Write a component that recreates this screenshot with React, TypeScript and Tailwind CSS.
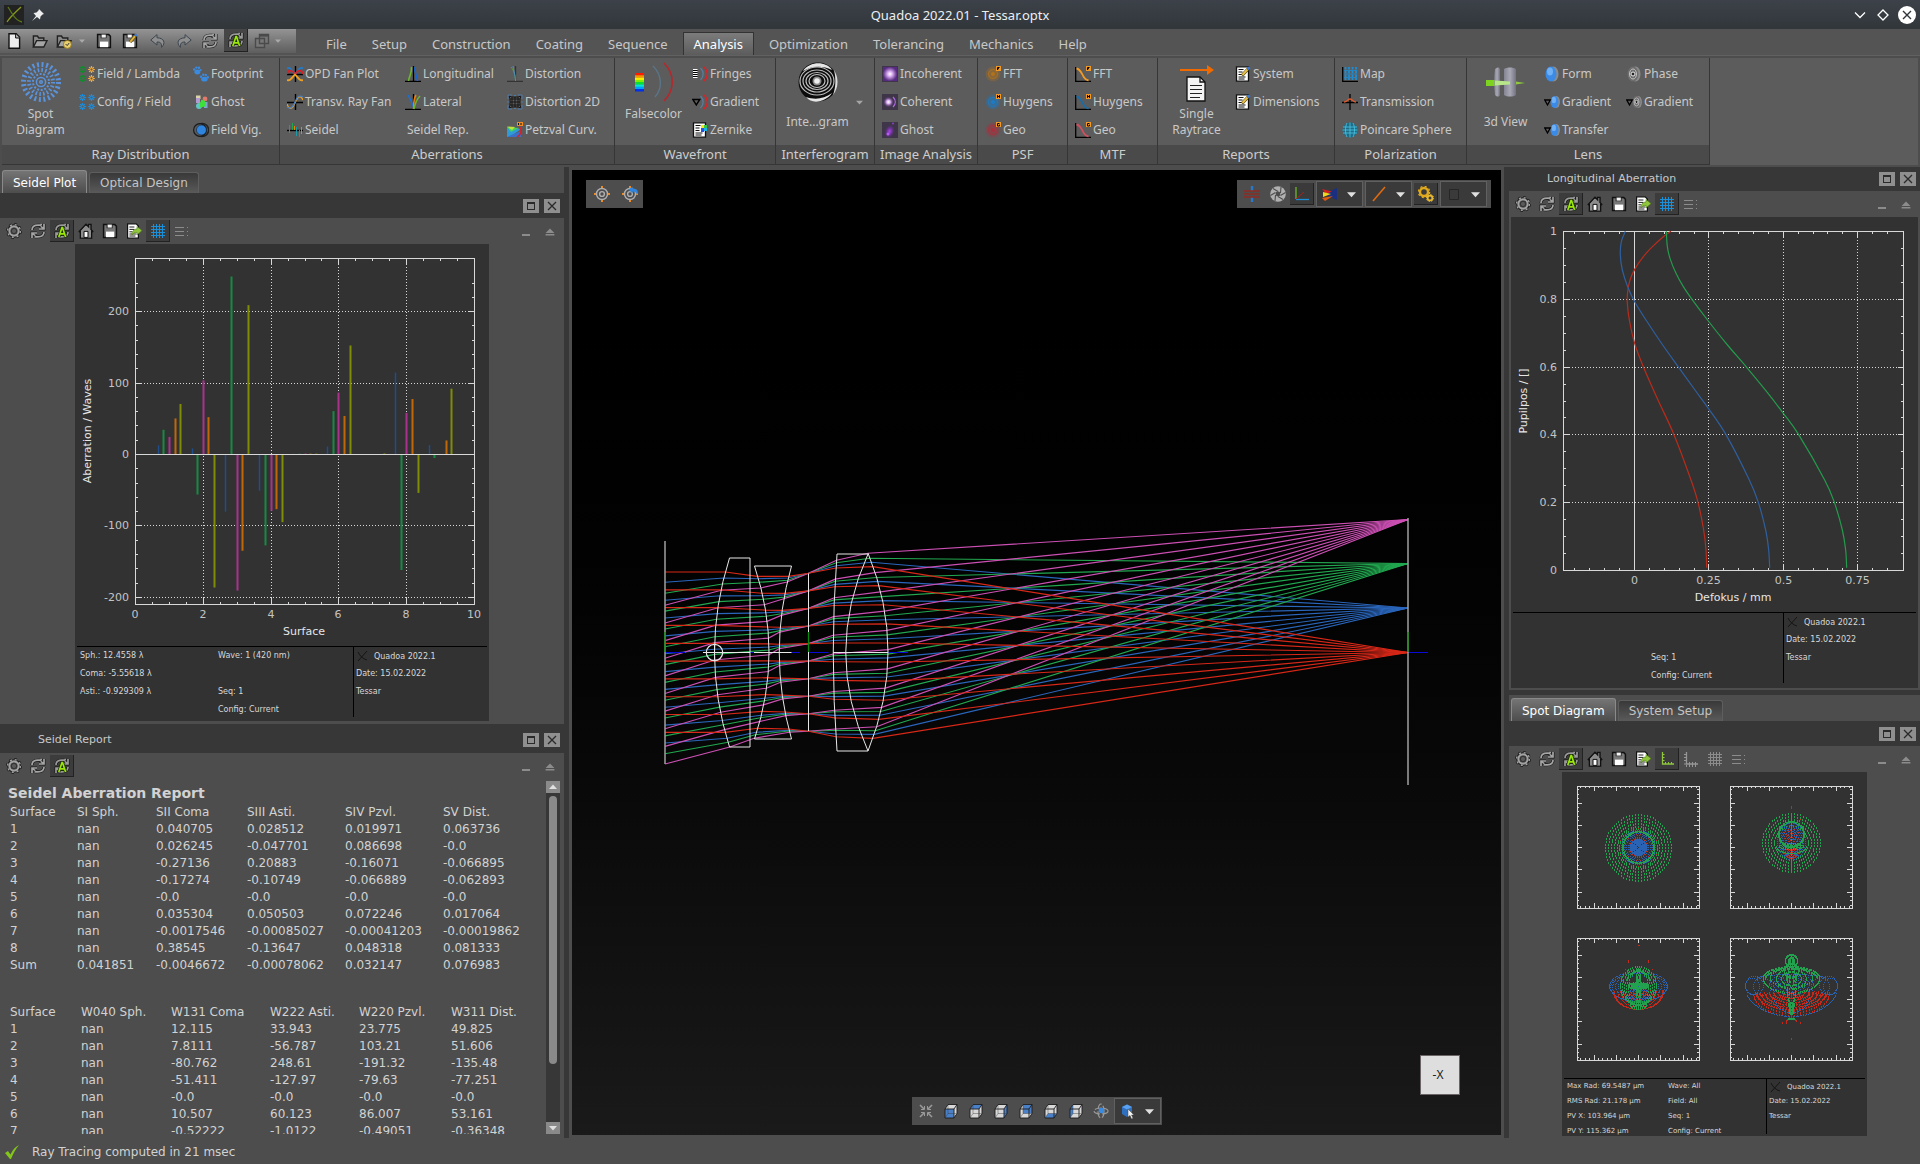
import type { ReactNode } from 'react'

/* ---------- icons ---------- */

const Svg = ({ size = 16, box = 16, children }: { size?: number; box?: number; children: ReactNode }) => (
  <svg width={size} height={size} viewBox={`0 0 ${box} ${box}`} fill="none" className="shrink-0" aria-hidden="true">
    {children}
  </svg>
)

const Gear = () => (
  <Svg>
    <circle cx="8" cy="8" r="6.6" stroke="#1c1c1c" strokeWidth="2.6" strokeDasharray="2.6 2.6" />
    <circle cx="8" cy="8" r="5" stroke="#1c1c1c" strokeWidth="3.6" />
    <circle cx="8" cy="8" r="6.4" stroke="#a2a2a2" strokeWidth="1.4" strokeDasharray="2 3.03" />
    <circle cx="8" cy="8" r="4.6" stroke="#a2a2a2" strokeWidth="2.2" />
    <circle cx="8" cy="8" r="2.6" fill="#5a5a5a" stroke="#2a2a2a" strokeWidth=".8" />
  </Svg>
)

const refreshPath = 'M2 7C2 3.6 5 2.2 8 2.2h3.4M11.2 2.2V.8M14 1v5h-5M14 5.6 10.6 3.4M14 9c0 3.4-3 4.8-6 4.8H4.6M2 15v-5h5M2 10.4l3.4 2.2'
const Refresh = () => (
  <Svg>
    <path d={refreshPath} stroke="#1a1a1a" strokeWidth="3" />
    <path d={refreshPath} stroke="#a5a5a5" strokeWidth="1.7" />
  </Svg>
)

const AutoRefresh = () => (
  <Svg>
    <path d={refreshPath} stroke="#151515" strokeWidth="3" />
    <path d={refreshPath} stroke="#9a9a9a" strokeWidth="1.7" />
    <path d="M4.8 14 8 4.6h.5L11.6 14M6 10.8h4.6" stroke="#1b2b00" strokeWidth="3" />
    <path d="M4.8 14 8 4.6h.5L11.6 14M6 10.8h4.6" stroke="#9be80c" strokeWidth="1.7" />
  </Svg>
)

const Home = () => (
  <Svg>
    <path d="M.8 9 8 1.2l2.6 2.6V1.4h2.4v5l2.2 2.6M2.4 8v7h11.2V8" stroke="#111" strokeWidth="1.4" fill="#858585" />
    <path d="M8 2.6 13 8v6.4H3V8Z" fill="#8c8c8c" />
    <path d="M6 8.4h4v6H6z" fill="#fff" stroke="#111" strokeWidth="1" />
  </Svg>
)

const Save = ({ pen = false }: { pen?: boolean }) => (
  <Svg>
    <path d="M1.6 1.6h11.2l1.6 1.6v11.2H1.6Z" fill="#777" stroke="#111" strokeWidth="1.5" />
    <path d="M4.6 1.2h6v4h-6z" fill="#222" />
    <path d="M7.6 1.6h2.2v3H5.6v-3z" fill="#f5f5f5" />
    <path d="M4 8.6h8.2v5.6H4z" fill="#fff" />
    {pen && (
      <>
        <path d="M8 9 14 2" stroke="#5a4a10" strokeWidth="3.4" />
        <path d="M8.2 8.8 13 3.2" stroke="#e0b23a" strokeWidth="2" />
        <path d="m13 3.2 1.6-1.8" stroke="#3d7bd8" strokeWidth="2.6" />
      </>
    )}
  </Svg>
)

const Export = () => (
  <Svg>
    <path d="M1.6.8h8.6l2.2 2.2v12.2H1.6Z" fill="#fff" stroke="#111" strokeWidth="1.2" />
    <path d="M3.4 4h5M3.4 6.4h5M3.4 8.8h3M3.4 11h7M3.4 13h6" stroke="#222" />
    <path d="M6 12c0-4 2-6 5-6V3.4L16 7.6 11 12V9.4c-2.4 0-4 .8-5 2.6Z" fill="#8fc63d" stroke="#4f7a14" strokeWidth=".6" />
  </Svg>
)

const Grid = ({ color = '#1b8fd8' }: { color?: string }) => (
  <Svg>
    <path d="M3.5 1v14M6.5 1v14M9.5 1v14M12.5 1v14M1 3.5h14M1 6.5h14M1 9.5h14M1 12.5h14" stroke={color} />
  </Svg>
)

const List = () => (
  <Svg>
    <path d="M1 4.5h9M1 8.5h9M1 12.5h9M13 4.5h1M13 8.5h1M13 12.5h1" stroke="#8c8c8c" />
  </Svg>
)

const Axis = ({ gray = false }: { gray?: boolean }) => (
  <Svg>
    <path d="M3.5 1v12H15" stroke={gray ? '#969696' : '#8fc63d'} strokeWidth="1.3" />
    <path
      d={gray ? 'M1 3.5h2M1 6.5h2M1 9.5h2M1 13h2M3.5 16v-2M6.5 11v5M9.5 11v5M12.5 11v5' : 'M3.5 3.5h2M3.5 6.5h2M3.5 9.5h2M6.5 11v2M9.5 11v2M12.5 11v2'}
      stroke={gray ? '#969696' : '#8fc63d'}
    />
  </Svg>
)

const Minimize = () => (
  <Svg>
    <path d="M4 11h8v2H4z" fill="#8c8c8c" />
  </Svg>
)

const Eject = () => (
  <Svg>
    <path d="M8 5.4 12.4 10H3.6ZM3.6 11h8.8v1.4H3.6z" fill="#8c8c8c" />
  </Svg>
)

const Arrow = ({ color = '#8c8c8c', size = 8 }: { color?: string; size?: number }) => (
  <Svg size={size} box={8}>
    <path d="M0 2h8L4 6.4Z" fill={color} />
  </Svg>
)

const Folder = ({ clock = false }: { clock?: boolean }) => (
  <Svg>
    <path d="M1.4 14V3h4l1.4 2h5v3" fill="#8a8a8a" stroke="#222" strokeWidth="1.4" />
    <path d="M1.4 14 4.6 7.6H15L11.8 14Z" fill="#a5a5a5" stroke="#222" strokeWidth="1.4" />
    {clock && (
      <>
        <circle cx="11.4" cy="11.4" r="4" fill="#e9cf74" stroke="#8a6d14" strokeWidth=".8" />
        <path d="m9.6 11 1.6 1.6 2-2.6" stroke="#333" />
      </>
    )}
  </Svg>
)

const NewFile = () => (
  <Svg>
    <path d="M3 .8h7.2l3.4 3.4v11H3Z" fill="#eee" stroke="#111" strokeWidth="1.4" />
    <path d="M9.6 1v4h4" fill="#bbb" stroke="#111" />
  </Svg>
)

const Undo = ({ flip = false }: { flip?: boolean }) => (
  <Svg>
    <path
      transform={flip ? 'matrix(-1 0 0 1 16 0)' : undefined}
      d="M7 1.6.8 7 7 12V9c3.4-.2 5 1.4 4.6 5.4C15.8 10 14.4 5 7 4.8Z"
      fill="#8e8e8e"
      stroke="#3c4650"
    />
  </Svg>
)

const Windows = () => (
  <Svg>
    <path d="M5.5 1.5h9v9h-9zM1.5 5.5h9v9h-9z" fill="#777" stroke="#4a4a4a" strokeWidth="1.4" />
    <path d="M5 2.6h10" stroke="#4a4a4a" strokeWidth="2" />
  </Svg>
)

const star = (x: number, y: number) =>
  [0, 45, 90, 135, 180, 225, 270, 315]
    .map((a) => {
      const c = Math.cos((a * Math.PI) / 180)
      const s = Math.sin((a * Math.PI) / 180)
      return `M${x + c} ${y + s}L${x + c * 3.4} ${y + s * 3.4}`
    })
    .join('')
const Stars = ({ a, b }: { a: string; b: string }) => (
  <Svg>
    <path d={star(3.5, 3.5) + star(3.5, 12.5)} stroke={a} strokeWidth="1.2" />
    <path d={star(12.5, 3.5) + star(12.5, 12.5)} stroke={b} strokeWidth="1.2" />
  </Svg>
)

const Footprint = () => (
  <Svg>
    <g fill="#3a8ae0">
      <ellipse cx="4.4" cy="6" rx="3" ry="2.4" />
      <circle cx="1.2" cy="3.4" r="1.2" />
      <circle cx="3.4" cy="1.6" r="1.2" />
      <circle cx="6" cy="1.8" r="1.2" />
      <circle cx="7.6" cy="4" r="1.1" />
      <ellipse cx="11.4" cy="13.2" rx="3.2" ry="2.4" />
      <circle cx="8" cy="10.8" r="1.2" />
      <circle cx="10.2" cy="8.8" r="1.2" />
      <circle cx="12.8" cy="9" r="1.2" />
      <circle cx="14.8" cy="11.2" r="1.2" />
    </g>
  </Svg>
)

const GhostColor = () => (
  <Svg>
    <rect x="3" y="1.5" width="4.5" height="3.5" fill="#dcd3a8" />
    <rect x="3" y="4" width="4" height="5" fill="#b39ad0" />
    <circle cx="12" cy="5" r="2.4" fill="#e27a6c" />
    <circle cx="6" cy="12" r="3" fill="#62c6c4" />
    <rect x="11" y="8" width="3.5" height="6" fill="#7fa4cf" />
    <path d="M8.5 5.5 12 7v5.5l-5 1V9Z" fill="#3de03a" />
  </Svg>
)

const FieldVig = () => (
  <Svg>
    <circle cx="9" cy="8" r="6.6" stroke="#222" strokeWidth="1.4" />
    <circle cx="7" cy="8" r="6.4" fill="#5c5c5c" stroke="#1a1a1a" strokeWidth="1.2" />
    <circle cx="8.4" cy="8" r="5" fill="#2f84dd" stroke="#10243a" strokeWidth=".6" />
  </Svg>
)

const OpdFan = () => (
  <Svg>
    <path d="M0 8.5h16M8.5 0v16" stroke="#000" strokeWidth="1.4" />
    <path d="M0 2.5c3-2 4 1 8 6 4-5 5-8 8-6" stroke="#1d7ed0" strokeWidth="1.8" />
    <path d="M0 8c2-6 6-3 8 .5C10 5 14 2 16 8" stroke="#d2232a" strokeWidth="1.8" />
    <path d="M0 14c3 1 4-1 8-5.5 4 4.5 5 6.5 8 5.5" stroke="#f0a020" strokeWidth="1.8" />
  </Svg>
)

const RayFan = () => (
  <Svg>
    <path d="M0 8.5h16M8.5 0v16" stroke="#000" strokeWidth="1.4" />
    <path d="M0 10c2 6 5 6 8-1s6-8 8-3" stroke="#f0a020" strokeWidth="1.3" />
    <path d="M0 13c3 2 6 1 8-5s5-7 8-5" stroke="#4a7fc0" strokeWidth="1.3" />
  </Svg>
)

const SeidelIcon = () => (
  <Svg>
    <path d="M0 8.5h16" stroke="#000" strokeWidth="1.4" />
    <path d="M2.5 3v8M9.5 5v9" stroke="#1a9aa8" />
    <path d="M5.5 1v7M12.5 8v7" stroke="#1fa650" />
    <path d="M7.5 4v4M14.5 5v7" stroke="#f07f09" />
  </Svg>
)

const Longi = () => (
  <Svg>
    <path d="M0 15.5h16M8.5 0v15" stroke="#000" strokeWidth="1.3" />
    <path d="M3.5 15C4 10 7 8 6.5 1" stroke="#6db52c" strokeWidth="1.6" />
    <path d="M10 1c-1 6 2 8 2.5 14" stroke="#1565d8" strokeWidth="1.6" />
  </Svg>
)

const Lateral = () => (
  <Svg>
    <path d="M0 15.5h16M8.5 0v15" stroke="#000" strokeWidth="1.3" />
    <path d="M3 1c2 4 5 8 5.5 14" stroke="#1c6fd6" strokeWidth="1.5" />
    <path d="M11 1C8 6 9 10 8.5 15" stroke="#f07f09" strokeWidth="1.5" />
    <path d="M15 2c-3 3-5 8-6 13" stroke="#6db52c" strokeWidth="1.5" />
  </Svg>
)

const Distortion = () => (
  <Svg>
    <path d="M0 15.5h16M8.5 0v15" stroke="#333" strokeWidth="1.3" />
    <path d="M4 1c3 4 4 7 4.5 14" stroke="#5c9c3a" />
    <path d="M6 0c1 6 2 8 2.5 15" stroke="#4a90c8" />
  </Svg>
)

const Distortion2D = () => (
  <Svg>
    <path
      d="M2 2c3 1.500 9 1.500 12 0M3 5h10M3 8h10M3 11h10M2 14c3-1.500 9-1.500 12 0M2 2c1.500 3 1.500 9 0 12M5 3v10M8 3v10M11 3v10M14 2c-1.500 3-1.500 9 0 12"
      stroke="#161616"
    />
    <path d="M1 5V1h4M7 1.5h2M11 1h4v4M15 7v2M15 11v4h-4M9 14.5H7M5 15H1v-4M1 9V7" stroke="#4a7aaa" />
  </Svg>
)

const Petzval = () => (
  <Svg>
    <path d="M0 5 14 7 3 15H0Z" fill="#2e9ad8" />
    <path d="M0 5 12 6 4 10Z" fill="#45d35f" />
    <path d="M0 4.5 8 5 5 8Z" fill="#c5e23a" />
    <path d="M0 15 14 9v6Z" fill="#3b6fc8" />
    <path d="M13 5c2 4 1 8-3 10" stroke="#d2232a" strokeWidth="1.5" />
    <path d="M10 0h6v4h-6z" fill="#f08a24" />
    <path d="M11.5 1v2M14 1v2" stroke="#111" />
  </Svg>
)

const arcs = (
  <>
    <path d="M8.500 2c3.500 3.500 3.500 8.500 0 12" stroke="#5a7d9c" strokeWidth="1.3" />
    <path d="M12 1c4.500 4 4.500 10 0 14" stroke="#d8232a" strokeWidth="1.5" />
  </>
)

const Fringes = () => (
  <Svg>
    <path d="M1 3.5h4.500M1 5.500h4.500M1 7.500h4.500M1 9.500h4.500M1 11.500h4.500" stroke="#fff" />
    <path d="M1 4.500h4.500M1 6.500h4.500M1 8.500h4.500M1 10.500h4.500" stroke="#000" />
    {arcs}
  </Svg>
)

const Gradient = () => (
  <Svg>
    <path d="M.8 5.500h7L4.300 11Z" stroke="#000" strokeWidth="1.4" />
    {arcs}
  </Svg>
)

const Report = ({ tint }: { tint: 'rainbow' | 'pen' }) => (
  <Svg>
    <path d="M1.500.8h12v14.400h-12z" fill="#fff" stroke="#111" strokeWidth="1.3" />
    <path d="M3.500 3.500h5M3.500 6h4M3.500 8.500h4M3.500 11h7M3.500 13h6" stroke="#111" />
    {tint === 'rainbow' ? (
      <>
        <path d="M9 3h3v3H9z" fill="#f6e71c" />
        <path d="M12 3h3v3h-3z" fill="#37c24a" />
        <path d="M9 6h3v4H9z" fill="#2b50e0" />
        <path d="M12 6h3v3h-3z" fill="#18b5e8" />
      </>
    ) : (
      <>
        <path d="m7 9.500 6.500-7" stroke="#4d4010" strokeWidth="3.2" />
        <path d="m7.400 9 5-5.500" stroke="#eac24a" strokeWidth="2" />
        <path d="m12.600 3.300 2-2" stroke="#3d7bd8" strokeWidth="2.4" />
      </>
    )}
  </Svg>
)

const Glow = ({ kind }: { kind: 'inc' | 'coh' | 'ghost' }) => (
  <Svg>
    <defs>
      <radialGradient id={`glow-${kind}`}>
        <stop offset="0" stopColor={kind === 'ghost' ? '#a347e0' : '#fff'} />
        <stop offset=".35" stopColor={kind === 'ghost' ? '#8038b0' : '#dcb0f2'} />
        <stop offset="1" stopColor="#5a2a86" stopOpacity={kind === 'inc' ? 0.9 : 0} />
      </radialGradient>
    </defs>
    <rect width="16" height="16" fill="#3e3548" />
    {kind === 'inc' && <rect x="1" y="1" width="14" height="14" fill="url(#glow-inc)" />}
    {kind === 'coh' && (
      <>
        <circle cx="6.5" cy="8" r="5.5" fill="url(#glow-coh)" />
        <path d="M11 3c3 3 3 7 0 10" stroke="#b06be0" strokeWidth="1.3" />
      </>
    )}
    {kind === 'ghost' && (
      <>
        <ellipse cx="7.5" cy="9.5" rx="5" ry="7" transform="rotate(20 7.5 9.5)" fill="url(#glow-ghost)" />
        <circle cx="6" cy="12" r="1.5" fill="#b95bf5" />
        <circle cx="11" cy="1.5" r="1" fill="#8a3fc0" />
      </>
    )}
  </Svg>
)

// small orange tag in the corner
const tags: Record<string, string> = {
  F: 'M12.5 4V1.5h2M12.5 2.7h1.5',
  H: 'M12.5 1v3M14.5 1v3M12.5 2.5h2',
  G: 'M14.5 1.5h-2V4h2V2.7',
}
const Tag = ({ t }: { t: string }) => (
  <>
    <path d="M11 0h5v5h-5z" fill="#f39a26" />
    <path d={tags[t]} stroke="#000" />
  </>
)

const Psf = ({ color, t }: { color: string; t: string }) => (
  <Svg>
    <circle cx="8" cy="8" r="7.5" fill={color} opacity=".3" />
    <circle cx="8" cy="8" r="5.5" fill={color} opacity=".35" />
    <circle cx="8" cy="8" r="4.5" stroke={color} opacity=".7" />
    <circle cx="8" cy="8" r="2" fill={color} />
    <Tag t={t} />
  </Svg>
)

const Mtf = ({ color, t }: { color: string; t: string }) => (
  <Svg>
    <path d="M.7 1v14.3H16" stroke="#000" strokeWidth="1.3" />
    <path d="M1.5 2.5c4 .5 5 5 7 8s2 3.5 5 4" stroke={color} strokeWidth="1.8" />
    <Tag t={t} />
  </Svg>
)

const MapIcon = () => (
  <Svg>
    <path d="M.7 1v14.3H16" stroke="#000" strokeWidth="1.3" />
    <path d="M3.5 1v13M7 1v13M10.5 1v13M14 1v13" stroke="#1b8fd8" strokeWidth="1.8" strokeDasharray="2.5 1.2" />
    <path d="M2 4.5h13M2 8h13M2 11.5h13" stroke="#1b8fd8" strokeWidth=".8" />
  </Svg>
)

const Transmission = () => (
  <Svg>
    <path d="M8 0v16M0 8.500h16" stroke="#000" strokeWidth="1.3" />
    <path d="M2 8c3 0 4-3 6-3s3 3 6 3" stroke="#e05a2a" strokeWidth="1.3" />
  </Svg>
)

const Sphere = () => (
  <Svg>
    <circle cx="8" cy="8" r="7.5" fill="#1f6c86" />
    <path d="M8 .5v15M5 1c-2 4-2 10 0 14M11 1c2 4 2 10 0 14M1 5h14M.5 8h15M1 11h14" stroke="#4cc8e8" strokeWidth=".8" />
  </Svg>
)

const LensIcon = ({ phase = false, tri = false }: { phase?: boolean; tri?: boolean }) => (
  <Svg>
    <g transform={tri ? 'translate(5.5 1.5) scale(.72 .8)' : undefined}>
      <ellipse cx="9.5" cy="8" rx="5" ry="7.5" fill="#8c8c8c" />
      <ellipse cx="7" cy="8" rx="5.5" ry="7.5" fill={phase ? '#6e6e6e' : '#3a8ae6'} />
      {phase ? (
        <>
          <ellipse cx="7" cy="8" rx="3.5" ry="5" stroke="#ccc" strokeWidth=".9" />
          <circle cx="7" cy="8" r="2" fill="#222" stroke="#eee" />
        </>
      ) : (
        <ellipse cx="6" cy="5.5" rx="3" ry="4" fill="#6fb0f5" />
      )}
    </g>
    {tri && <path d="M.8 6h5.5L3.5 11Z" stroke="#000" strokeWidth="1.3" />}
  </Svg>
)

/* large ribbon drawings */

const SpotBig = () => (
  <Svg size={40} box={40}>
    <g stroke="#5a93dc">
      <circle cx="20" cy="20" r="17.5" strokeWidth="5" strokeDasharray="2 2.582" />
      <circle cx="20" cy="20" r="12" strokeWidth="4" strokeDasharray="1.6 2.17" />
      <circle cx="20" cy="20" r="8" strokeWidth="2" strokeDasharray="2 1.6" />
      <circle cx="20" cy="20" r="4.6" strokeWidth="1.5" />
      <circle cx="20" cy="20" r="1.3" strokeWidth="1.5" />
    </g>
  </Svg>
)

const Falsecolor = () => (
  <Svg size={40} box={40}>
    {['#ff1a00', '#ff9000', '#f6f000', '#7df000', '#00e830', '#00e8d0', '#00a0ff', '#0030e8'].map((c, i) => (
      <rect key={c} x="1" y={11 + i * 2.3} width="9" height="2.4" fill={c} />
    ))}
    <path d="M19 4c9 9 10 22 2 31" stroke="#5a7488" strokeWidth="1.4" />
    <path d="M30 1c11 11 11 27 0 38" stroke="#b5282c" strokeWidth="1.6" />
  </Svg>
)

const Interfero = () => (
  <Svg size={40} box={40}>
    <circle cx="20" cy="20" r="19.5" fill="#0c0c0c" />
    <path d="M5 9C12-1 28-1 34 8 24 3 14 4 5 9ZM8 35c9 3 18 2 26-4-6 9-20 12-26 4Z" fill="#e6e6e6" />
    <path d="M36 8c5 8 5 17-1 25 3-9 3-17 1-25Z" fill="#ddd" />
    <g stroke="#bdbdbd" strokeWidth="1.2">
      <ellipse cx="19" cy="19" rx="17" ry="14" />
      <ellipse cx="19" cy="19" rx="14" ry="11" />
      <ellipse cx="19" cy="19" rx="11" ry="8.5" />
      <ellipse cx="19" cy="19" rx="8" ry="6.5" />
    </g>
    <circle cx="19" cy="19" r="4.5" fill="#888" />
    <circle cx="19" cy="19" r="2.8" fill="#eee" />
  </Svg>
)

const SingleRay = () => (
  <Svg size={40} box={40}>
    <path d="M3 8h28" stroke="#f06a00" strokeWidth="2" />
    <path d="M30 3l7 5-7 5Z" fill="#f06a00" />
    <path d="M10 15h13l5 5v19H10Z" fill="#f4f4f4" stroke="#111" strokeWidth="1.3" />
    <path d="M23 15v5h5" stroke="#111" strokeWidth="1.3" />
    <path d="M13 23.500h12M13 27.500h12M13 31.500h12M13 35.500h10" stroke="#222" strokeWidth="1.2" />
  </Svg>
)

const View3d = () => (
  <Svg size={40} box={40}>
    <defs>
      <linearGradient id="lens3d">
        <stop offset="0" stopColor="#8d8da0" />
        <stop offset=".5" stopColor="#bcbccc" />
        <stop offset="1" stopColor="#77778a" />
      </linearGradient>
    </defs>
    <path d="M0 18h9v6H0z" fill="#7ed321" />
    <path d="M9 7c2-2 4-2 5 0v26c-1 2-3 2-5 0-1-8-1-18 0-26Z" fill="url(#lens3d)" opacity=".8" />
    <path d="M18 7c3-2 9-2 12 0v26c-3 2-9 2-12 0Z" fill="url(#lens3d)" opacity=".8" />
    <path d="M9 18.500 24 19.500V22.500L9 23.500Z" fill="#b8e78a" />
    <path d="M30 19.500 39 21 30 22.500Z" fill="#8fc63d" />
  </Svg>
)

/* ---------- menu + ribbon ---------- */

const menus = ['File', 'Setup', 'Construction', 'Coating', 'Sequence', 'Analysis', 'Optimization', 'Tolerancing', 'Mechanics', 'Help']

const QuickButton = ({ label, className = '', children }: { label: string; className?: string; children: ReactNode }) => (
  <button aria-label={label} className={`flex h-[23px] w-6 shrink-0 items-center justify-center ${className}`}>
    {children}
  </button>
)

const TitleBar = () => (
  <header className="flex h-[29px] items-center bg-linear-to-b from-[#3d424a] to-[#30363a] px-1">
    <div className="flex flex-1 items-center">
      <svg width="20" height="20" viewBox="0 0 20 20" className="bg-[#222] fill-none" aria-hidden="true">
        <path d="M3 17C6 12 13 6 17 2" stroke="#8a9a1e" strokeWidth="1.3" />
        <path d="M4 2c2 3 3 5 5 8s5 6 9 7" stroke="#5a7a1a" strokeWidth="1.3" />
      </svg>
      <svg width="12" height="12" viewBox="0 0 12 12" className="ml-2" aria-hidden="true">
        <path d="M7 0 12 5 10.5 5.5 8.5 7.5 8 10.5 5 8 0 12 4 7 1.5 4 4.5 3.5 6.5 1.5Z" fill="#eee" />
      </svg>
    </div>
    <h1 className="font-['Noto_Sans'] text-[13px] leading-5 text-[#eceff1]">Quadoa 2022.01 - Tessar.optx</h1>
    <div className="flex flex-1 items-center justify-end gap-[7px]">
      <button aria-label="Minimize window">
        <Svg>
          <path d="m3 5.500 5 5 5-5" stroke="#fff" strokeWidth="1.3" />
        </Svg>
      </button>
      <button aria-label="Maximize window">
        <Svg>
          <path d="m8 3 5 5-5 5-5-5Z" stroke="#fff" strokeWidth="1.3" />
        </Svg>
      </button>
      <button aria-label="Close window">
        <Svg size={18} box={18}>
          <circle cx="9" cy="9" r="9" fill="#fff" />
          <path d="m5 5 8 8m0-8-8 8" stroke="#31363b" strokeWidth="1.4" />
        </Svg>
      </button>
    </div>
  </header>
)

const MenuBar = () => (
  <div className="flex h-[27px] border-b border-[#616161] bg-[#545454]">
    <div className="flex h-6 w-[296px] items-start bg-linear-to-b from-[#949494] to-[#5e5e5e] pl-0.5">
      <QuickButton label="New"><NewFile /></QuickButton>
      <QuickButton label="Open" className="ml-0.5"><Folder /></QuickButton>
      <QuickButton label="Open recent"><Folder clock /></QuickButton>
      <QuickButton label="Recent files" className="-mr-2"><span className="-ml-3"><Arrow color="#aaa" size={6} /></span></QuickButton>
      <QuickButton label="Save"><Save /></QuickButton>
      <QuickButton label="Save as" className="ml-0.5"><Save pen /></QuickButton>
      <QuickButton label="Undo" className="ml-1"><Undo /></QuickButton>
      <QuickButton label="Redo" className="ml-0.5"><Undo flip /></QuickButton>
      <QuickButton label="Update" className="ml-0.5"><Refresh /></QuickButton>
      <QuickButton label="Auto update" className="ml-0.5 border-r border-b border-[#222] bg-[#464646]"><AutoRefresh /></QuickButton>
      <QuickButton label="Windows" className="ml-0.5"><Windows /></QuickButton>
      <QuickButton label="Window list"><span className="-ml-4"><Arrow color="#aaa" size={6} /></span></QuickButton>
    </div>
    <nav className="flex items-end gap-px pl-[18px] font-['Noto_Sans'] text-[13px] text-[#c8c8c8]">
      {menus.map((m) =>
        m === 'Analysis' ? (
          <a key={m} href="#analysis" className="mx-0.5 flex h-[23px] items-center border border-b-0 border-[#333] bg-linear-to-b from-[#7c7c7c] to-[#5c5c5c] px-2.5 pt-0.5 text-white">
            {m}
          </a>
        ) : (
          <a key={m} href={`#${m.toLowerCase()}`} className="flex h-[23px] items-center px-3 pt-0.5">
            {m}
          </a>
        ),
      )}
    </nav>
  </div>
)

const Group = ({ name, width, children }: { name: string; width: string; children: ReactNode }) => (
  <section className={`flex shrink-0 flex-col border-r border-b border-[#363636] ${width}`}>
    <div className="flex h-[87px] pt-0.5">{children}</div>
    <h2 className="h-[19px] bg-[#4a4a4a] text-center font-['Noto_Sans'] text-[13px] leading-[19px] text-[#cdcdcd]">{name}</h2>
  </section>
)

const Big = ({ icon, label, low = false }: { icon: ReactNode; label: string; low?: boolean }) => (
  <button className="flex w-[77px] shrink-0 flex-col items-center pt-0.5 text-xs leading-4 text-[#c8c8c8]">
    {icon}
    <span className={low ? 'mt-3 w-16' : 'mt-1 w-16'}>{label}</span>
  </button>
)

type Item = [string, ReactNode]
const Col = ({ items, width = '' }: { items: Item[]; width?: string }) => (
  <div className={`shrink-0 text-xs text-[#c8c8c8] ${width}`}>
    {items.map(([label, icon]) => (
      <button key={label} className="flex h-7 items-center gap-0.5 whitespace-nowrap">
        {icon}
        {label}
      </button>
    ))}
  </div>
)

const Ribbon = () => (
  <div className="m-0.5 flex h-[107px] overflow-hidden bg-[#5c5c5c] font-['Noto_Sans']">
    <Group name="Ray Distribution" width="w-[278px]">
      <Big icon={<SpotBig />} label="Spot Diagram" />
      <Col width="w-[114px]" items={[['Field / Lambda', <Stars a="#138a2e" b="#f2a93b" />], ['Config / Field', <Stars a="#1b8fe0" b="#1b8fe0" />]]} />
      <Col items={[['Footprint', <Footprint />], ['Ghost', <GhostColor />], ['Field Vig.', <FieldVig />]]} />
    </Group>
    <Group name="Aberrations" width="w-[335px] [&>div]:pl-[7px]">
      <Col width="w-[118px]" items={[['OPD Fan Plot', <OpdFan />], ['Transv. Ray Fan', <RayFan />], ['Seidel', <SeidelIcon />]]} />
      <Col width="w-[102px]" items={[['Longitudinal', <Longi />], ['Lateral', <Lateral />], ['Seidel Rep.', <span />]]} />
      <Col items={[['Distortion', <Distortion />], ['Distortion 2D', <Distortion2D />], ['Petzval Curv.', <Petzval />]]} />
    </Group>
    <Group name="Wavefront" width="w-[161px]">
      <Big icon={<Falsecolor />} label="Falsecolor" />
      <Col items={[['Fringes', <Fringes />], ['Gradient', <Gradient />], ['Zernike', <Report tint="rainbow" />]]} />
    </Group>
    <Group name="Interferogram" width="w-[99px] [&>div]:pl-[3px]">
      <Big icon={<Interfero />} label="Inte...gram" low />
      <button aria-label="Interferogram options" className="self-center"><Arrow color="#a5a5a5" size={7} /></button>
    </Group>
    <Group name="Image Analysis" width="w-[103px] [&>div]:pl-[7px]">
      <Col items={[['Incoherent', <Glow kind="inc" />], ['Coherent', <Glow kind="coh" />], ['Ghost', <Glow kind="ghost" />]]} />
    </Group>
    <Group name="PSF" width="w-[90px] [&>div]:pl-[7px]">
      <Col items={[['FFT', <Psf color="#b0721c" t="F" />], ['Huygens', <Psf color="#1b7cc8" t="H" />], ['Geo', <Psf color="#a8303c" t="G" />]]} />
    </Group>
    <Group name="MTF" width="w-[90px] [&>div]:pl-[7px]">
      <Col items={[['FFT', <Mtf color="#f39a26" t="F" />], ['Huygens', <Mtf color="#1b6ca8" t="H" />], ['Geo', <Mtf color="#d05060" t="G" />]]} />
    </Group>
    <Group name="Reports" width="w-[177px]">
      <Big icon={<SingleRay />} label="Single Raytrace" />
      <Col items={[['System', <Report tint="pen" />], ['Dimensions', <Report tint="pen" />]]} />
    </Group>
    <Group name="Polarization" width="w-[132px] [&>div]:pl-[7px]">
      <Col items={[['Map', <MapIcon />], ['Transmission', <Transmission />], ['Poincare Sphere', <Sphere />]]} />
    </Group>
    <Group name="Lens" width="w-[243px]">
      <Big icon={<View3d />} label="3d View" low />
      <Col width="w-[82px]" items={[['Form', <LensIcon />], ['Gradient', <LensIcon tri />], ['Transfer', <LensIcon tri />]]} />
      <Col items={[['Phase', <LensIcon phase />], ['Gradient', <LensIcon phase tri />]]} />
    </Group>
  </div>
)

/* ---------- docks ---------- */

const DockHeader = ({ title = '', className = '' }: { title?: string; className?: string }) => (
  <div className={`flex shrink-0 items-center justify-end gap-[5px] bg-[#373737] pr-1 ${className}`}>
    <h2 className="flex-1 text-[11px] leading-4 text-[#c8c8c8]">{title}</h2>
    <button aria-label={`Float ${title}`} className="flex h-3.5 w-4 items-center justify-center bg-[#8f8f8f]">
      <span className="h-2 w-2 border border-t-2 border-[#2a2a2a]" />
    </button>
    <button aria-label={`Close ${title}`} className="flex h-3.5 w-4 items-center justify-center bg-[#8f8f8f]">
      <Svg size={10} box={10}>
        <path d="m1 1 8 8m0-8-8 8" stroke="#2a2a2a" strokeWidth="1.3" />
      </Svg>
    </button>
  </div>
)

const ToolBar = ({ tools }: { tools: [string, ReactNode, boolean?][] }) => (
  <div className="flex h-[26px] shrink-0 items-center px-0.5">
    {tools.map(([label, icon, on]) => (
      <button
        key={label}
        aria-label={label}
        className={`flex h-[22px] w-6 items-center justify-center ${on ? 'border-r border-b border-[#222] bg-[#3c3c3c]' : ''}`}
      >
        {icon}
      </button>
    ))}
    <button aria-label="Minimize panel" className="ml-auto flex h-[22px] w-6 items-center justify-center"><Minimize /></button>
    <button aria-label="Eject panel" className="flex h-[22px] w-6 items-center justify-center"><Eject /></button>
  </div>
)

const Tabs = ({ tabs }: { tabs: [string, string] }) => (
  <div className="flex items-end gap-0.5 pl-0.5 text-xs" role="tablist">
    <button role="tab" aria-selected="true" className="h-[23px] rounded-t-[3px] border border-b-0 border-[#8a8a8a] bg-linear-to-b from-[#757575] to-[#4d4d4d] px-2.5 pt-0.5 text-white">
      {tabs[0]}
    </button>
    <button role="tab" aria-selected="false" className="h-[21px] rounded-t-[3px] border border-b-0 border-[#5e5e5e] bg-linear-to-b from-[#393939] to-[#5a5a5a] px-2.5 text-[#c4c4c4]">
      {tabs[1]}
    </button>
  </div>
)

const baseTools: [string, ReactNode, boolean?][] = [
  ['Settings', <Gear />],
  ['Refresh', <Refresh />],
  ['Auto refresh', <AutoRefresh />, true],
]
const fileTools: [string, ReactNode, boolean?][] = [
  ['Home', <Home />],
  ['Save', <Save />],
  ['Export', <Export />],
]

const PlotFooter = ({ left, mid, cols, text, row }: { left: string[]; mid: string[]; cols: string; text: string; row: string }) => (
  <div className={`mx-0.5 grid border-t border-black text-[#d8d8d8] ${cols} ${text}`}>
    <ul className="pl-[3px]">{left.map((t, i) => <li key={i} className={row}>{t}</li>)}</ul>
    <ul>{mid.map((t, i) => <li key={i} className={row}>{t}</li>)}</ul>
    <ul className="border-l border-black pl-0.5">
      <li className={`flex items-center ${row}`}>
        <svg width="14" height="10" viewBox="0 0 14 10" className="mr-1 fill-none" aria-hidden="true">
          <path d="M2 10 11 0M2 1c2 4 5 7 9 8" stroke="#151515" />
        </svg>
        Quadoa 2022.1
      </li>
      <li className={row}>Date: 15.02.2022</li>
      <li className={row}>Tessar</li>
    </ul>
  </div>
)

const smooth = (pts: number[][]) => {
  let d = `M${pts[0][0]} ${pts[0][1]}`
  for (let i = 0; i < pts.length - 1; i++) {
    const a = pts[i - 1] || pts[i]
    const b = pts[i]
    const c = pts[i + 1]
    const e = pts[i + 2] || c
    d += `C${b[0] + (c[0] - a[0]) / 6} ${b[1] + (c[1] - a[1]) / 6} ${c[0] - (e[0] - b[0]) / 6} ${c[1] - (e[1] - b[1]) / 6} ${c[0]} ${c[1]}`
  }
  return d
}

/* Seidel bars, one row per surface: coma, asti, pzvl, dist, sum */
const seidel = [
  [12.1, 33.9, 23.8, 49.8, 70],
  [7.8, -56.8, 103.2, 51.6, -187],
  [-80.8, 248.6, -191.3, -135.5, 208.5],
  [-51.4, -128, -79.6, -77.3, -95.5],
  [0.5, 0.5, 0.5, 0.5, 0.5],
  [10.5, 60.1, 86, 53.2, 152],
  [-0.5, -1, -0.5, -0.4, 0.7],
  [114, -162.5, 57.5, 77, -54.5],
  [12.5, -5.6, -0.9, 19, 91.5],
]
const barColors = ['#1f4e8c', '#168a42', '#a8328c', '#c06808', '#7f8c06']

const SeidelPlot = () => {
  const x = (v: number) => Math.round(60 + v * 33.9)
  const y = (v: number) => Math.round(210 - v * 0.714)
  const minorX = Array.from({ length: 19 }, (_, i) => (i + 1) * 0.5)
  const minorY = Array.from({ length: 23 }, (_, i) => -200 + i * 20)
  return (
    <svg viewBox="0 0 414 402" className="block w-full fill-none text-[11px]" role="img" aria-label="Seidel plot">
      <g stroke="#d8d8d8" shapeRendering="crispEdges">
        {[2, 4, 6, 8].map((v) => <path key={v} d={`M${x(v) + 0.5} 14V360`} strokeDasharray="1 2" />)}
        {[200, 100, -100, -200].map((v) => <path key={v} d={`M60 ${y(v) + 0.5}H399`} strokeDasharray="1 2" />)}
        <path d={minorX.map((v) => `M${x(v) + 0.5} 14v${v % 2 ? 3 : 6}M${x(v) + 0.5} 360v${v % 2 ? -2 : -6}`).join('')} />
        <path d={minorY.map((v) => `M60 ${y(v) + 0.5}h${v % 100 ? 3 : 6}M399 ${y(v) + 0.5}h${v % 100 ? -2 : -6}`).join('')} />
      </g>
      {seidel.map((row, s) =>
        row.map((v, k) => {
          const px = Math.round(60 + (s + 1 + (k - 2) / 6) * 33.9) + 0.5
          return <path key={`${s}-${k}`} d={`M${px} 210V${210 - v * 0.714}`} stroke={barColors[k]} strokeWidth={k ? 2 : 1.5} />
        }),
      )}
      <path d="M60.5 14.5h339v346h-339zM60 210.5h339" stroke="#d8d8d8" shapeRendering="crispEdges" />
      <g fill="#c4c4c4" textAnchor="end">
        {[200, 100, 0, -100, -200].map((v) => <text key={v} x="54" y={y(v) + 4}>{v}</text>)}
      </g>
      <g fill="#c4c4c4" textAnchor="middle">
        {[0, 2, 4, 6, 8, 10].map((v) => <text key={v} x={x(v)} y="374">{v}</text>)}
      </g>
      <g fill="#e6e6e6" textAnchor="middle">
        <text x="229" y="391">Surface</text>
        <text transform="translate(16 187) rotate(-90)">Aberration / Waves</text>
      </g>
    </svg>
  )
}

const curves: [string, number[][]][] = [
  ['#b82c1c', [[513, 214], [490, 230], [455, 262], [430, 290], [404, 328], [390, 360], [383, 395], [382, 430], [388, 480], [404, 550], [430, 620], [474, 720], [522, 824], [573, 960], [594, 1027], [611, 1110], [618, 1170], [620, 1223]]],
  ['#2f5f9e', [[376, 214], [364, 245], [361, 285], [367, 330], [383, 380], [404, 425], [440, 483], [486, 552], [536, 622], [585, 690], [625, 745], [678, 824], [748, 960], [775, 1027], [797, 1110], [806, 1170], [809, 1223]]],
  ['#259a4c', [[499, 214], [502, 260], [510, 295], [528, 340], [550, 380], [576, 418], [625, 483], [680, 552], [740, 622], [800, 695], [850, 760], [896, 824], [974, 960], [1003, 1027], [1027, 1110], [1037, 1170], [1040, 1223]]],
]

const LongitudinalPlot = () => {
  const x = (v: number) => Math.round(123 + v * 297.6) + 0.5
  const y = (v: number) => Math.round(353 - v * 339) + 0.5
  const minorX = Array.from({ length: 22 }, (_, i) => (i - 4) * 5)
  const minorY = Array.from({ length: 19 }, (_, i) => (i + 1) * 5)
  return (
    <svg viewBox="0 0 407 395" className="block w-full fill-none text-[11px]" role="img" aria-label="Longitudinal aberration plot">
      <g stroke="#d8d8d8" shapeRendering="crispEdges">
        {[0.25, 0.5, 0.75].map((v) => <path key={v} d={`M${x(v)} 14V353`} strokeDasharray="1 2" />)}
        {[0.2, 0.4, 0.6, 0.8].map((v) => <path key={v} d={`M52 ${y(v)}H392`} strokeDasharray="1 2" />)}
        <path d={minorX.map((v) => `M${x(v / 100)} 14v${v % 25 ? 3 : 6}M${x(v / 100)} 353v${v % 25 ? -2 : -6}`).join('')} />
        <path d={minorY.map((v) => `M52 ${y(v / 100)}h${v % 20 ? 3 : 6}M392 ${y(v / 100)}h${v % 20 ? -2 : -5}`).join('')} />
        <path d={`M52.5 14.5h340v339h-340zM${x(0)} 14V353`} />
      </g>
      {curves.map(([c, pts]) => (
        <path key={c} d={smooth(pts.map(([a, b]) => [a / 3 - 11, b / 3 - 57]))} stroke={c} strokeWidth="1.2" />
      ))}
      <g fill="#c4c4c4" textAnchor="end">
        {[1, 0.8, 0.6, 0.4, 0.2, 0].map((v) => <text key={v} x="46" y={y(v) + 3.5}>{v}</text>)}
      </g>
      <g fill="#c4c4c4" textAnchor="middle">
        {[0, 0.25, 0.5, 0.75].map((v) => <text key={v} x={x(v)} y="367">{v}</text>)}
      </g>
      <g fill="#e6e6e6" textAnchor="middle">
        <text x="222" y="384">Defokus / mm</text>
        <text transform="translate(16 184) rotate(-90)">Pupilpos / []</text>
      </g>
    </svg>
  )
}

/* ring of dots: cx, cy, rx, ry, count, start and end angle in turns */
type Ring = [number, number, number, number, number, number?, number?]
const rings = (list: Ring[], h: number) =>
  list
    .map(([cx, cy, rx, ry, n, a = 0, b = 1]) =>
      Array.from({ length: n }, (_, i) => {
        const t = (a + ((b - a) * i) / n) * Math.PI * 2
        return `M${Math.round(cx + rx * Math.cos(t))} ${Math.round(cy + ry * Math.sin(t))}h1v${h}h-1z`
      }).join(''),
    )
    .join('')
const disc = (cx: number, cy: number, rx: number, ry: number, steps: number, dens = 3): Ring[] =>
  Array.from({ length: steps }, (_, i) => {
    const f = (i + 1) / steps
    return [cx, cy, rx * f, ry * f, Math.max(6, Math.round(rx * f * dens))]
  })
const halfDisc = (cx: number, cy: number, rx: number, ry: number, steps: number, dens = 2): Ring[] =>
  disc(cx, cy, rx, ry, steps, dens).map(([a, b, c, d, n]) => [a, b, c, d, n, 0, 0.5])

const R = '#c8281a'
const B = '#2a62b4'
const G = '#22a24e'
// color, rings, dot height
const spots: [string, Ring[], number][][] = [
  [
    [G, [...[33, 30, 27, 24, 21, 19].map((r, i): Ring => [61, 61, r, r, 68 - i * 4])], 2],
    [G, [[61, 61, 16, 16, 110], [61, 61, 15, 15, 90], [61, 61, 17, 17, 50]], 1],
    [R, [[61, 61, 19, 19, 16], [61, 61, 13, 13, 26], [61, 61, 9, 9, 30]], 1],
    [B, [[61, 61, 17, 17, 46], [61, 61, 14, 14, 40], [61, 61, 12, 12, 30], [61, 61, 10, 10, 30], ...disc(61, 61, 8, 8, 8, 7)], 1],
  ],
  [
    [G, [...[29, 26, 23, 20, 17].map((r, i): Ring => [61, 56, r, r, 60 - i * 4])], 2],
    [B, [...disc(61, 55, 14, 18, 9, 4)], 1],
    [R, [...disc(61, 49, 8, 7, 3, 2), ...halfDisc(61, 62, 8, 10, 5, 3), [61, 21, 0, 1, 4], [51, 33, 0, 0, 1], [70, 33, 0, 0, 1]], 1],
    [G, [[61, 48, 12, 12, 90], [61, 48, 13, 13, 80], [61, 56, 0, 29, 120], ...disc(61, 60, 12, 3, 4, 3), [61, 60, 15, 7, 60, 0, 0.5]], 1],
  ],
  [
    [R, [...halfDisc(61, 52, 24, 19, 8, 2), [61, 53, 24, 18, 90, 0, 0.5], [61, 53, 25, 18, 90, 0, 0.5], [61, 7, 1, 0, 3], [51, 23, 0, 1, 3], [71, 23, 0, 1, 3], [48, 31, 0, 0, 1], [75, 31, 0, 0, 1]], 1],
    [B, [[61, 48, 29, 15, 90], [61, 49, 28, 14, 50], [61, 49, 26, 15, 60], [61, 48, 23, 13, 50], [61, 48, 20, 11, 30], ...disc(61, 56, 9, 8, 5, 4)], 1],
    [G, [[61, 47, 18, 19, 50], [61, 48, 16, 18, 44], [61, 49, 14, 17, 40], [61, 50, 12, 19, 40], [61, 50, 10, 18, 36], ...disc(61, 47, 10, 3, 4, 4), ...disc(61, 47, 2, 17, 3, 22), ...disc(61, 66, 8, 4, 3, 3)], 2],
  ],
  [
    [R, [...halfDisc(61, 54, 38, 23, 9, 1), [61, 84, 5, 5, 10, 0.5, 1], [61, 100, 0, 0, 1], [52, 84, 0, 1, 2], [70, 84, 0, 1, 2]], 2],
    [R, halfDisc(61, 53, 36, 18, 8, 2), 1],
    [B, [[24, 47, 9, 9, 30], [22, 48, 7, 8, 24], [32, 48, 9, 9, 26], [98, 47, 9, 9, 30], [100, 48, 7, 8, 24], [90, 48, 9, 9, 26], [61, 48, 46, 30, 70, 0.04, 0.46], [61, 40, 34, 4, 60, 0.5, 1], ...disc(61, 46, 22, 10, 6, 2), [61, 56, 18, 18, 40, 0, 0.5]], 1],
    [G, [[61, 39, 28, 11, 50, 0.5, 1], [61, 40, 26, 10, 40, 0.5, 1], [61, 40, 28, 14, 40, 0, 0.5], [61, 39, 21, 10, 36], ...disc(61, 40, 15, 10, 3, 3), [61, 22, 6, 6, 40], [61, 22, 3, 3, 12], [61, 32, 7, 7, 30], [61, 46, 4, 28, 60], [61, 46, 2, 28, 40], [61, 66, 2, 2, 12], [61, 73, 2, 2, 12], [61, 80, 3, 0, 20]], 2],
  ],
]

const SpotPlot = () => {
  const ticks = Array.from({ length: 27 }, (_, i) => i - 13)
  return (
    <svg viewBox="0 0 305 306" className="block w-full fill-none" role="img" aria-label="Spot diagrams" shapeRendering="crispEdges">
      {spots.map((layers, i) => (
        <g key={i} transform={`translate(${i % 2 ? 168 : 15} ${i > 1 ? 166 : 14})`}>
          <path
            stroke="#d8d8d8"
            d={ticks
              .map((t) => {
                const p = Math.round(61 + t * 4.45) + 0.5
                const l = t % 5 ? 2 : 5
                return `M${p} 0v${l}M${p} 122v${-l}M0 ${p}h${l}M122 ${p}h${-l}`
              })
              .join('')}
          />
          <path d="M.5.5h122v122H.5z" stroke="#d8d8d8" />
          {layers.map(([c, list, h], k) => <path key={k} d={rings(list, h)} fill={c} />)}
        </g>
      ))}
    </svg>
  )
}

/* ---------- report ---------- */

const report1 = [
  ['Surface', 'SI Sph.', 'SII Coma', 'SIII Asti.', 'SIV Pzvl.', 'SV Dist.'],
  ['1', 'nan', '0.040705', '0.028512', '0.019971', '0.063736'],
  ['2', 'nan', '0.026245', '-0.047701', '0.086698', '-0.0'],
  ['3', 'nan', '-0.27136', '0.20883', '-0.16071', '-0.066895'],
  ['4', 'nan', '-0.17274', '-0.10749', '-0.066889', '-0.062893'],
  ['5', 'nan', '-0.0', '-0.0', '-0.0', '-0.0'],
  ['6', 'nan', '0.035304', '0.050503', '0.072246', '0.017064'],
  ['7', 'nan', '-0.0017546', '-0.00085027', '-0.00041203', '-0.00019862'],
  ['8', 'nan', '0.38545', '-0.13647', '0.048318', '0.081333'],
  ['Sum', '0.041851', '-0.0046672', '-0.00078062', '0.032147', '0.076983'],
]
const report2 = [
  ['Surface', 'W040 Sph.', 'W131 Coma', 'W222 Asti.', 'W220 Pzvl.', 'W311 Dist.'],
  ['1', 'nan', '12.115', '33.943', '23.775', '49.825'],
  ['2', 'nan', '7.8111', '-56.787', '103.21', '51.606'],
  ['3', 'nan', '-80.762', '248.61', '-191.32', '-135.48'],
  ['4', 'nan', '-51.411', '-127.97', '-79.63', '-77.251'],
  ['5', 'nan', '-0.0', '-0.0', '-0.0', '-0.0'],
  ['6', 'nan', '10.507', '60.123', '86.007', '53.161'],
  ['7', 'nan', '-0.52222', '-1.0122', '-0.49051', '-0.36348'],
]

const ReportTable = ({ rows, cols }: { rows: string[][]; cols: string[] }) => (
  <table className="ml-2.5 w-[530px] table-fixed text-left text-xs leading-[17px]">
    <colgroup>
      {cols.map((c, i) => <col key={i} className={c} />)}
      <col />
    </colgroup>
    <thead>
      <tr>{rows[0].map((c) => <th key={c} scope="col" className="font-normal whitespace-nowrap">{c}</th>)}</tr>
    </thead>
    <tbody>
      {rows.slice(1).map((r) => (
        <tr key={r[0]}>{r.map((c, i) => <td key={i}>{c}</td>)}</tr>
      ))}
    </tbody>
  </table>
)

const LeftColumn = () => (
  <aside className="flex w-[569px] shrink-0 flex-col border-r-[5px] border-[#373737]">
    <div className="flex h-[27px] shrink-0 items-end border-b border-[#373737]">
      <Tabs tabs={['Seidel Plot', 'Optical Design']} />
    </div>
    <DockHeader className="h-6" />
    <ToolBar tools={[...baseTools, ...fileTools, ['Grid', <Grid />, true], ['Legend', <List />]]} />
    <div className="mb-[3px] w-[414px] shrink-0 self-center bg-[#323232]">
      <SeidelPlot />
      <PlotFooter
        left={['Sph.: 12.4558 λ', 'Coma: -5.55618 λ', 'Asti.: -0.929309 λ']}
        mid={['Wave: 1 (420 nm)', '\u00a0', 'Seq: 1', 'Config: Current']}
        cols="h-[75px] grid-cols-[141px_135px_1fr] [&>ul]:h-[70px]"
        text="text-[8px]"
        row="h-[18px] leading-[17px]"
      />
    </div>
    <DockHeader title="Seidel Report" className="h-[29px] pt-0.5 pl-[38px]" />
    <ToolBar tools={baseTools} />
    <div className="mt-0.5 mb-1 flex min-h-0 flex-1 pr-1">
      <div className="flex-1 overflow-hidden text-[#d2d2d2]">
        <h3 className="h-[23px] pl-2 text-sm leading-[25px] font-bold">Seidel Aberration Report</h3>
        <ReportTable rows={report1} cols={['w-[67px]', 'w-[79px]', 'w-[91px]', 'w-[98px]', 'w-[98px]']} />
        <div className="h-[30px]" />
        <ReportTable rows={report2} cols={['w-[71px]', 'w-[90px]', 'w-[99px]', 'w-[89px]', 'w-[92px]']} />
      </div>
      <div className="flex w-3.5 flex-col bg-[#373737]">
        <button aria-label="Scroll up" className="flex h-3 items-center justify-center bg-[#8a8a8a]"><span className="rotate-180"><Arrow color="#e0e0e0" /></span></button>
        <div className="flex-1 p-[3px]">
          <div className="h-[83%] rounded bg-[#8a8a8a]" />
        </div>
        <button aria-label="Scroll down" className="flex h-3 items-center justify-center bg-[#8a8a8a]"><Arrow color="#e0e0e0" /></button>
      </div>
    </div>
  </aside>
)

const RightColumn = () => (
  <aside className="flex w-[416px] shrink-0 flex-col bg-[#373737]">
    <DockHeader title="Longitudinal Aberration" className="h-6 pl-[43px]" />
    <div className="ml-[5px] bg-[#4d4d4d]">
      <ToolBar tools={[...baseTools, ...fileTools, ['Grid', <Grid />, true], ['Legend', <List />]]} />
      <div className="mx-0.5 border-b-2 border-[#4d4d4d] bg-[#323232]">
        <LongitudinalPlot />
        <PlotFooter
          left={[]}
          mid={['\u00a0', '\u00a0', 'Seq: 1', 'Config: Current']}
          cols="h-[76px] grid-cols-[138px_132px_1fr] [&>ul]:h-[70px]"
          text="text-[8px]"
          row="h-[18px] leading-[17px]"
        />
      </div>
    </div>
    <div className="mt-[5px] ml-[5px] flex h-[26px] items-end bg-[#4d4d4d]">
      <Tabs tabs={['Spot Diagram', 'System Setup']} />
    </div>
    <DockHeader className="h-[25px]" />
    <div className="ml-[5px] flex flex-1 flex-col bg-[#4d4d4d]">
      <ToolBar tools={[...baseTools, ...fileTools, ['Axes', <Axis />, true], ['Outer axes', <Axis gray />], ['Grid', <Grid color="#8c8c8c" />], ['Legend', <List />]]} />
      <div className="w-[305px] self-center bg-[#323232]">
        <SpotPlot />
        <PlotFooter
          left={['Max Rad: 69.5487 µm', 'RMS Rad: 21.178 µm', 'PV X: 103.964 µm', 'PV Y: 115.362 µm']}
          mid={['Wave: All', 'Field: All', 'Seq: 1', 'Config: Current']}
          cols="h-[58px] grid-cols-[104px_98px_1fr] [&>ul]:h-[55px]"
          text="text-[7px]"
          row="h-[15px] leading-[14px]"
        />
      </div>
    </div>
  </aside>
)

/* ---------- 3d view ---------- */

// heights of the first and last ray of each field at every station
const fields: { color: string; focus: number; first: number[]; last: number[] }[] = [
  { color: '#2a66bc', focus: 608, first: [247, 234, 236, 234, 220, 197, 187], last: [729, 715, 697, 691, 694, 702, 703] },
  { color: '#22a850', focus: 563.5, first: [280, 252, 247, 241, 220, 188, 175], last: [761, 727, 704, 693, 694, 691, 692] },
  { color: '#cc50b4', focus: 519.5, first: [316, 271, 264, 246, 220, 181, 160], last: [792, 741, 715, 697, 694, 687, 680] },
  { color: '#d82818', focus: 652.5, first: [216, 216, 229, 229, 220, 204, 200], last: [697, 697, 685, 687, 694, 710, 715] },
]
const axisY = 652.5
const stations: ((y: number) => number)[] = [
  () => 665,
  (y) => 714.5 + 15 * ((y - axisY) / 94) ** 2,
  (y) => 769 - 15 * ((y - axisY) / 86) ** 2,
  (y) => 779 + 12 * ((y - axisY) / 86) ** 2,
  () => 808.5,
  (y) => 833 + 4 * ((y - axisY) / 99) ** 2,
  (y) => 888 - 20 * ((y - axisY) / 99) ** 2,
]
const rayPath = (f: (typeof fields)[number], i: number) =>
  stations
    .map((sx, s) => {
      const y = 500 + (f.first[s] + ((f.last[s] - f.first[s]) * i) / 9) / 3
      return `${s ? 'L' : 'M'}${sx(y).toFixed(1)} ${y.toFixed(1)}`
    })
    .join('') + `L1408 ${f.focus}`

const Scene = () => (
  <svg viewBox="572 170 929 965" className="block h-full w-full fill-none" role="img" aria-label="Lens layout">
    {fields.map((f) => (
      <g key={f.color} stroke={f.color} strokeWidth="1.15">
        {Array.from({ length: 10 }, (_, i) => <path key={i} d={rayPath(f, i)} />)}
      </g>
    ))}
    <path d="M665 652.5h20M750 652.5h4M791 652.5h9M808.5 652.5h20M888 652.5h20M1408 652.5h20" stroke="#0a0ad8" strokeWidth="1.2" />
    <g stroke="#e8e8e8">
      <path d="M665 541v223M1408 518v267" stroke="#a0a0a0" strokeWidth="1.5" />
      <path d="M750 558h-20.5Q699.5 652.5 729.5 747H750Z" />
      <path d="M754.5 566h37Q767 652.5 791.5 739h-37Q783.5 652.5 754.5 566Z" />
      <path d="M808.5 573.5v157.5" />
      <path d="M837 554h31Q823.5 652.5 868 751H837Q829.5 652.5 837 554ZM868 553Q908 652 868 751" />
      <path d="M703 652.5h47M754 652.5h37.500M833 652.5h55M714.5 644v17" />
      <circle cx="714.5" cy="652.5" r="8.2" strokeWidth="1.2" />
    </g>
    <path d="M665 632v20M808.5 632v20M1408 632v20" stroke="#0a8a0a" strokeWidth="1.3" />
  </svg>
)

const cubeFaces: Record<string, string> = {
  Front: 'M2 6h9v9H2z',
  Top: 'M2 6 5 1.5h9L11 6Z',
  Right: 'M11 6l3-4.5v9L11 15Z',
  Back: 'M5 1.5h9v9H5z',
  Bottom: 'M2 15 5 10.5h9L11 15Z',
  Left: 'M2 6l3-4.5v9L2 15Z',
}
const Cube = ({ face }: { face: string }) => (
  <Svg>
    <path d="M2 6 5 1.5h9v9L11 15H2Z" fill="#d8d8d8" />
    <path d={cubeFaces[face]} fill="#4a80c8" />
    <path d="M2 6 5 1.5h9v9L11 15H2ZM2 6h9v9M11 6l3-4.5" stroke="#1c1c1c" strokeWidth=".9" />
    <path d="M5 2v8.5h9M5 10.5 2 15" stroke="#333" strokeWidth=".4" />
  </Svg>
)

const Target = ({ back = false }: { back?: boolean }) => (
  <Svg>
    <path d="M7 0h2v2H7zM7 14h2v2H7zM0 7h2v2H0zM14 7h2v2h-2z" fill="#f08a1e" />
    <circle cx="8" cy="8" r="5.5" stroke="#b0b0b0" strokeWidth="1.4" />
    <circle cx="8" cy="8" r="2.4" stroke="#b0b0b0" strokeWidth="1.4" />
    {back && <path d="M6.5 3.5 10.5.5v2c5 0 6.500 3 4.500 6.500-.5-2.500-2-3.500-4.500-3.500v2Z" fill="#2f86e0" />}
  </Svg>
)

const DropTool = ({ label, children }: { label: string; children: ReactNode }) => (
  <button aria-label={label} className="flex h-[26px] w-[47px] items-center justify-between border border-[#606060] bg-[#3a3a3a] pr-1.5 pl-[5px]">
    {children}
    <Arrow color="#e0e0e0" size={9} />
  </button>
)

const Viewport = () => (
  <main className="relative m-[3px] min-w-0 flex-1 bg-linear-to-b from-black to-[#1a1a1a]">
    <Scene />
    <div className="absolute top-2.5 left-3.5 flex h-7 w-[57px] items-center justify-between bg-[#4d4d4d] pr-[5px] pl-2">
      <button aria-label="Set center"><Target /></button>
      <button aria-label="Reset center"><Target back /></button>
    </div>
    <div className="absolute top-2.5 right-2.5 flex h-7 items-center gap-0.5 bg-[#4d4d4d] pr-1 pl-[7px]">
      <button aria-label="Section">
        <Svg>
          <path d="M8 0v5M8 11v5" stroke="#2a78c8" strokeWidth="2.4" />
          <path d="M0 5h16M0 8h16M0 11h16" stroke="#8e2c24" strokeWidth="1.4" />
        </Svg>
      </button>
      <button aria-label="Aperture" className="mr-0.5 ml-2">
        <Svg>
          <circle cx="8" cy="8" r="7.8" fill="#b0b0b0" />
          <circle cx="8" cy="8" r="2.4" fill="#4d4d4d" />
          <path d="M8 5.5 3 2.5M10.5 7 11 1M10.5 9.5l5-3M8 10.5l5 3M5.5 9 5 15M5.5 6.5l-5 3" stroke="#4d4d4d" strokeWidth="1.1" />
        </Svg>
      </button>
      <button aria-label="Axes" className="flex h-[22px] w-6 items-center justify-center border-r border-b border-[#222] bg-[#3a3a3a]">
        <Svg>
          <path d="M2 1v12" stroke="#6db52c" strokeWidth="1.3" />
          <path d="M2 13.5h13" stroke="#1b8fd8" strokeWidth="1.3" />
          <path d="m2 13 8-7" stroke="#b02020" />
        </Svg>
      </button>
      <DropTool label="Color mode">
        <Svg>
          <path d="M2 8 15 2v12Z" fill="#1a2f80" />
          <path d="M0 3 10 5.5 4 8Z" fill="#d02020" />
          <path d="M1 6 9 8 1 11Z" fill="#f2d51c" />
          <path d="M0 12 11 10 3 15Z" fill="#e05a10" />
        </Svg>
      </DropTool>
      <DropTool label="Line style">
        <Svg>
          <path d="M2 15 14 1" stroke="#e06a10" strokeWidth="1.6" />
        </Svg>
      </DropTool>
      <button aria-label="View settings" className="flex h-[22px] w-6 items-center justify-center border-r border-b border-[#222] bg-[#3a3a3a]">
        <Svg>
          <circle cx="6" cy="6" r="4" stroke="#e0a81c" strokeWidth="2.4" />
          <circle cx="6" cy="6" r="5.6" stroke="#e0a81c" strokeWidth="1.4" strokeDasharray="2 2.4" />
          <circle cx="12" cy="12" r="2.4" stroke="#e8b830" strokeWidth="1.8" />
          <circle cx="12" cy="12" r="3.6" stroke="#e8b830" strokeDasharray="1.4 1.4" />
        </Svg>
      </button>
      <DropTool label="Background">
        <Svg>
          <path d="M3.5 3.5h9v10h-9z" stroke="#262626" />
        </Svg>
      </DropTool>
    </div>
    <div className="absolute right-[41px] bottom-10 flex h-10 w-10 items-center justify-center border border-[#6a6464] bg-[#dedede] pr-1 font-['Noto_Sans'] text-xs text-[#222]">
      -X
    </div>
    <div className="absolute bottom-2.5 left-1/2 flex h-7 -translate-x-1/2 items-center gap-[9px] bg-[#4d4d4d] pr-px pl-1.5">
      <button aria-label="Fit view">
        <Svg>
          <path d="m2 2 4 4M14 2l-4 4M2 14l4-4M14 14l-4-4" stroke="#9a9a9a" strokeWidth="1.6" />
          <path d="M6.5 3v3.5H3M9.5 3v3.5H13M6.5 13V9.5H3M9.5 13V9.5H13" stroke="#9a9a9a" />
        </Svg>
      </button>
      {Object.keys(cubeFaces).map((f) => (
        <button key={f} aria-label={`${f} view`}><Cube face={f} /></button>
      ))}
      <button aria-label="Orbit">
        <Svg>
          <ellipse cx="8" cy="8" rx="7" ry="3" stroke="#9a9a9a" strokeWidth="1.2" strokeDasharray="7 2" />
          <ellipse cx="8" cy="8" rx="3" ry="7" stroke="#9a9a9a" strokeWidth="1.2" strokeDasharray="7 2" />
          <circle cx="8.5" cy="7.5" r="2.8" fill="#3a8ae0" />
        </Svg>
      </button>
      <div className="-ml-1">
        <DropTool label="Selection mode">
          <Svg>
            <path d="M7 1.5 12 4v7l-5 3-5-3V4Z" fill="#2f6fc0" />
            <path d="M7 1.5 12 4 7 6.5 2 4Z" fill="#5aa0f0" />
            <path d="M8 6v8l2-1.5L11.5 16l1.5-.8L11.6 12H14Z" fill="#f2f2f2" stroke="#444" strokeWidth=".5" />
          </Svg>
        </DropTool>
      </div>
    </div>
  </main>
)

export default function App() {
  return (
    <div className="flex h-screen flex-col overflow-hidden bg-[#4d4d4d] font-['DejaVu_Sans',sans-serif]">
      <TitleBar />
      <MenuBar />
      <Ribbon />
      <div className="flex min-h-0 flex-1">
        <LeftColumn />
        <Viewport />
        <RightColumn />
      </div>
      <footer className="flex h-[26px] shrink-0 items-center pt-0.5 pl-1 text-xs text-[#d2d2d2]">
        <Svg>
          <path d="M1 9 4 7l2.5 3.5C8.5 6 11 3 15 1 11 6 9 10 7 15H6Z" fill="#84c51a" />
        </Svg>
        <p className="ml-3">Ray Tracing computed in 21 msec</p>
      </footer>
    </div>
  )
}
